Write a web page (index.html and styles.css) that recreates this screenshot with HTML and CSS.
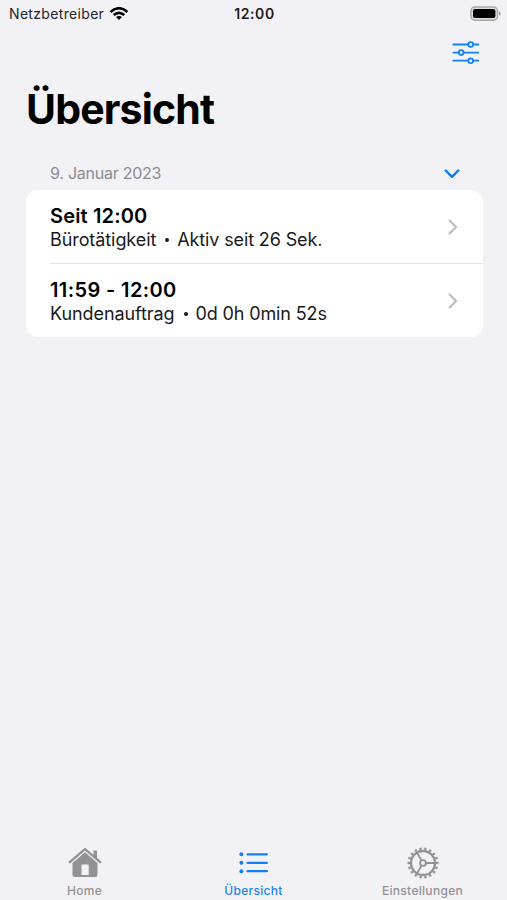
FILE: index.html
```html
<!DOCTYPE html>
<html lang="de">
<head>
<meta charset="utf-8">
<title>Übersicht</title>
<link rel="stylesheet" href="styles.css">
</head>
<body>
<div class="app">
  <header class="status">
    <div class="carrier"><span class="carrier-name">Netzbetreiber</span>
      <svg class="wifi" width="20" height="14" viewBox="0 0 20 14"><g fill="none" stroke="#000" stroke-width="2.6"><path d="M1.6 4.9Q10-2.4 18.4 4.9"/><path d="M4.7 8.1Q10 3.7 15.3 8.1"/></g><path d="M7 10.1Q10 7.8 13 10.1L10 13.1Z"/></svg>
    </div>
    <span class="clock">12:00</span>
    <svg class="battery" width="31" height="16" viewBox="0 0 31 16"><rect x=".9" y="1" width="26.6" height="13.2" rx="4" fill="#ddd" stroke="#aaaaad" stroke-width="1.5"/><rect x="3" y="3.1" width="22.4" height="9" rx="2" fill="#000"/><path d="M29 5.3Q32 7.6 29 9.9Z" fill="#929295"/></svg>
  </header>
  <nav class="toolbar">
    <svg width="28" height="24" viewBox="0 0 28 24" fill="#f2f1f6" stroke="#1480f5" stroke-width="1.8" stroke-linecap="round"><path d="M1.3 3.5H26.3M1.3 11.6H26.3M1.3 19.7H26.3"/><circle cx="18.7" cy="3.5" r="2.4"/><circle cx="9.2" cy="11.6" r="2.4"/><circle cx="18.7" cy="19.7" r="2.4"/></svg>
  </nav>
  <h1 class="title">Übersicht</h1>
  <main>
    <div class="section-head"><span class="date">9. Januar 2023</span>
      <svg class="expand" width="16" height="10" viewBox="0 0 16 10" fill="none" stroke="#087bf5" stroke-width="2.4" stroke-linecap="round" stroke-linejoin="round"><path d="M1.7 1.5L8 7.8L14.3 1.5"/></svg>
    </div>
    <ul class="card">
      <li class="row">
        <div><div class="time time-a">Seit 12:00</div><div class="detail"><span class="job">Bürotätigkeit</span><i class="dot"></i><span class="duration">Aktiv seit 26 Sek.</span></div></div>
        <svg class="chevron" width="10" height="17" viewBox="0 0 10 17"><path d="M1.7 1.7L8 8L1.7 14.3"/></svg>
      </li>
      <li class="row">
        <div><div class="time time-b">11:59 - 12:00</div><div class="detail"><span class="job">Kundenauftrag</span><i class="dot"></i><span class="duration">0d 0h 0min 52s</span></div></div>
        <svg class="chevron" width="10" height="17" viewBox="0 0 10 17"><path d="M1.7 1.7L8 8L1.7 14.3"/></svg>
      </li>
    </ul>
  </main>
  <nav class="tabs">
    <div class="tab">
      <svg width="34" height="34" viewBox="0 0 34 34"><path d="M1.8 17.2L17 4.2L32.2 17.2" fill="none" stroke="#919196" stroke-width="2.3" stroke-linecap="round" stroke-linejoin="round"/><path fill="#919196" fill-rule="evenodd" d="M25.5 5.5H29V14L25.5 11ZM17 7.3L29.5 18V29.5Q29.5 32 27 32H7Q4.5 32 4.5 29.5V18ZM13.5 19.5V30H20.7V19.5Z"/></svg>
      <span>Home</span>
    </div>
    <div class="tab active">
      <svg width="34" height="34" viewBox="0 0 34 34"><path d="M10.5 9.3H29.9M10.5 17.8H29.9M10.5 26.2H29.9" stroke="#147ff4" stroke-width="2.3" stroke-linecap="round"/><g fill="#147ff4"><circle cx="4.4" cy="9.3" r="2"/><circle cx="4.4" cy="17.8" r="2"/><circle cx="4.4" cy="26.2" r="2"/></g></svg>
      <span>Übersicht</span>
    </div>
    <div class="tab">
      <svg width="34" height="34" viewBox="0 0 34 34" fill="none" stroke="#919196"><circle cx="17" cy="18" r="14.2" stroke-width="2.6" pathLength="180" stroke-dasharray="4.5 5.5" stroke-dashoffset="2.25"/><circle cx="17" cy="18" r="12" stroke-width="2.3"/><circle cx="17" cy="18" r="2.9" stroke-width="1.9"/><path d="M20 18H29M15.5 15.4L11 7.6M15.5 20.6L11 28.4" stroke-width="1.9"/></svg>
      <span>Einstellungen</span>
    </div>
  </nav>
</div>
</body>
</html>
```
FILE: styles.css
```css
* { box-sizing: border-box; }
body { margin: 0; background: #f2f1f6; color: #000; font-family: Inter, "Liberation Sans", sans-serif; }
svg { display: block; flex: none; }
.app { width: 507px; height: 900px; display: flex; flex-direction: column; white-space: nowrap; }
.status { height: 28px; display: grid; grid-template-columns: 1fr auto 1fr; align-items: center; padding: 0 6px 1px 9px; }
.carrier { display: flex; align-items: center; gap: 5px; }
.carrier-name { font-size: 14px; color: #242426; letter-spacing: .33px; }
.clock { font-size: 14px; font-weight: 600; letter-spacing: .6px; margin-right: 1px; color: #19191b; }
.battery { justify-self: end; }
.toolbar { height: 49px; display: flex; justify-content: flex-end; padding: 13px 27px 0; }
.title { margin: 0; height: 81px; padding: 7px 26px 0; font-size: 41px; line-height: 51px; font-weight: 700; letter-spacing: -.85px; }
main { padding: 0 24.5px 0 25.5px; }
.section-head { height: 32px; padding: 0 23px 2px 24.5px; display: flex; justify-content: space-between; align-items: center; font-size: 16px; color: #8b8b90; }
.date { letter-spacing: -.25px; }
.expand { margin-top: 2px; }
.card { margin: 0; padding: 0 0 0 24.5px; list-style: none; background: #fff; border-radius: 12px; height: 147px; }
.row { height: 73px; display: flex; justify-content: space-between; align-items: center; padding: 1px 24.5px 0 0; }
.row + .row { border-top: 1px solid #e3e3e6; height: 74px; }
.time { font-size: 20px; line-height: 24px; font-weight: 600; }
.time-a { letter-spacing: .15px; }
.time-b { letter-spacing: .38px; }
.detail { display: flex; align-items: center; font-size: 18px; line-height: 23px; color: #19191b; }
.job { letter-spacing: -.08px; }
.duration { letter-spacing: -.13px; }
.dot { width: 4px; height: 4px; margin: 1px 8px 0 9px; border-radius: 50%; background: #19191b; }
.chevron { fill: none; stroke: #c1c1c4; stroke-width: 2.4; stroke-linecap: round; stroke-linejoin: round; }
.tabs { margin-top: auto; height: 55px; display: grid; grid-template-columns: repeat(3, 1fr); }
.tab { display: flex; flex-direction: column; align-items: center; font-size: 12px; line-height: 14px; font-weight: 500; color: #929297; gap: 5px; letter-spacing: .3px; }
.active { color: #2385f2; }
```
